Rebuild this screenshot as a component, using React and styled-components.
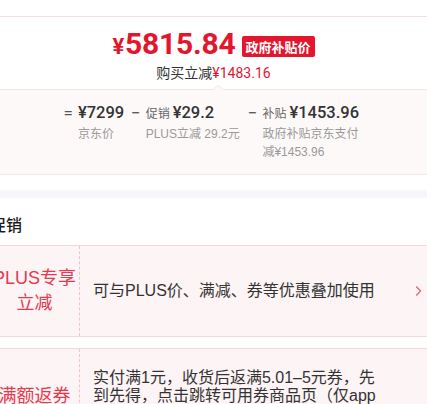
import React from "react";
import styled, { createGlobalStyle } from "styled-components";

const RED = "#e4162d";

const GlobalStyle = createGlobalStyle`
  html, body { margin: 0; padding: 0; background: #fff; }
  body {
    font-family: "Liberation Sans", "Noto Sans CJK SC", sans-serif;
    color: #333;
    overflow: hidden;
  }
  * { box-sizing: border-box; }
`;

const Page = styled.div`
  width: 427px;
  overflow: hidden;
  background: #fff;
`;

const TopStrip = styled.div`
  height: 17px;
  border-bottom: 1px solid #f6dfe2;
`;

const PricePanel = styled.div`
  display: flex;
  flex-direction: column;
  align-items: center;
  padding: 11px 0 6px;
`;

const PriceLine = styled.div`
  display: flex;
  align-items: center;
  height: 34px;
`;

const BigPrice = styled.span`
  font-family: Roboto, "Liberation Sans", sans-serif;
  font-weight: 700;
  font-size: 30px;
  line-height: 34px;
  color: ${RED};
  letter-spacing: -0.2px;
`;

const BigYen = styled.span`
  font-size: 22px;
  margin-right: 1px;
`;

const Badge = styled.span`
  margin-left: 6px;
  margin-top: 2px;
  height: 21px;
  padding: 0 4px;
  background: ${RED};
  color: #fff;
  border-radius: 2px;
  font-family: "Noto Sans CJK SC", sans-serif;
  font-weight: 700;
  font-size: 13px;
  line-height: 21px;
`;

const SubLine = styled.div`
  font-family: "Noto Sans CJK SC", sans-serif;
  font-size: 14px;
  line-height: 20px;
  color: #333;
`;

const RedNum = styled.span`
  font-family: Roboto, sans-serif;
  color: ${RED};
`;

const Breakdown = styled.div`
  position: relative;
  background: #fdf9f9;
  border-top: 1px solid #f2e4e5;
  border-bottom: 1px solid #ececec;
  padding: 12px 4px 13px 0;

  &::before,
  &::after {
    content: "";
    position: absolute;
    left: 213px;
    width: 0;
    height: 0;
    border-left: 5px solid transparent;
    border-right: 5px solid transparent;
  }
  &::before {
    top: -5px;
    border-bottom: 4px solid #f2e4e5;
  }
  &::after {
    top: -4px;
    border-bottom: 4px solid #fdf9f9;
  }
`;

const Formula = styled.div`
  display: flex;
  justify-content: center;
  align-items: flex-start;
  gap: 5px;
`;

const Op = styled.span`
  font-family: Roboto, sans-serif;
  font-size: 17px;
  line-height: 22px;
  color: #555;
`;

const Col = styled.div`
  display: flex;
  flex-direction: column;
  width: ${(p) => p.$w}px;
  flex: none;
`;

const ColTop = styled.div`
  display: flex;
  align-items: baseline;
  white-space: nowrap;
  height: 22px;
  line-height: 22px;
`;

const Tag = styled.span`
  font-family: "Noto Sans CJK SC", sans-serif;
  font-size: 12px;
  color: #666;
  margin-right: 3px;
`;

const Amount = styled.span`
  font-family: Roboto, sans-serif;
  font-weight: 500;
  font-size: 16.5px;
  color: #333;
`;

const Note = styled.div`
  margin-top: 1px;
  font-size: 12px;
  line-height: 18px;
  color: #999;
`;

const Spacer = styled.div`
  height: 15px;
`;

const Band = styled.div`
  height: 8px;
  background: #f5f7fa;
`;

const Promo = styled.section`
  margin-left: -10px;
  width: 437px;
`;

const Heading = styled.h3`
  margin: 0 0 9px;
  padding-top: 14px;
  font-family: "Noto Sans CJK SC", sans-serif;
  font-weight: 500;
  font-size: 16px;
  line-height: 24px;
  color: #1a1a1a;
`;

const Row = styled.div`
  display: flex;
  background: #fdf4f5;
  border-top: 1px solid #f4d9dc;
  border-bottom: 1px solid #f4d9dc;
  margin-bottom: 11px;
`;

const Label = styled.div`
  flex: none;
  width: 90px;
  display: flex;
  align-items: center;
  justify-content: center;
  text-align: center;
  padding: 20px 0;
  font-size: 18px;
  line-height: 25px;
  color: #e63950;
  border-right: 1px dashed #efc3c8;
`;

const Desc = styled.div`
  flex: 1;
  display: flex;
  align-items: center;
  padding: 20px 0 20px 13px;
  font-size: 16px;
  line-height: 18px;
  color: #333;
`;

const ArrowCell = styled.div`
  flex: none;
  width: 40px;
  display: flex;
  align-items: center;
  justify-content: flex-end;
  padding-right: 5px;
`;

const Chevron = () => (
  <svg width="7" height="12" viewBox="0 0 7 12" fill="none">
    <polyline points="1.2,1.5 5.6,6 1.2,10.5" stroke="#e0606e" strokeWidth="1.2" />
  </svg>
);

const promos = [
  { label: "PLUS专享立减", text: "可与PLUS价、满减、券等优惠叠加使用", arrow: true },
  {
    label: "满额返券",
    text: "实付满1元，收货后返满5.01–5元券，先到先得，点击跳转可用券商品页（仅app可用）",
    arrow: false,
  },
];

export default function App() {
  return (
    <Page>
      <GlobalStyle />
      <TopStrip />
      <PricePanel>
        <PriceLine>
          <BigPrice>
            <BigYen>¥</BigYen>5815.84
          </BigPrice>
          <Badge>政府补贴价</Badge>
        </PriceLine>
        <SubLine>
          购买立减<RedNum>¥1483.16</RedNum>
        </SubLine>
      </PricePanel>
      <Breakdown>
        <Formula>
          <Op>=</Op>
          <Col $w={48}>
            <ColTop>
              <Amount>¥7299</Amount>
            </ColTop>
            <Note>京东价</Note>
          </Col>
          <Op>−</Op>
          <Col $w={97}>
            <ColTop>
              <Tag>促销</Tag>
              <Amount>¥29.2</Amount>
            </ColTop>
            <Note>PLUS立减 29.2元</Note>
          </Col>
          <Op>−</Op>
          <Col $w={97}>
            <ColTop>
              <Tag>补贴</Tag>
              <Amount>¥1453.96</Amount>
            </ColTop>
            <Note>政府补贴京东支付减¥1453.96</Note>
          </Col>
        </Formula>
      </Breakdown>
      <Spacer />
      <Band />
      <Promo>
        <Heading>促销</Heading>
        {promos.map((p) => (
          <Row key={p.label}>
            <Label>{p.label}</Label>
            <Desc>
              <span>{p.text}</span>
            </Desc>
            <ArrowCell>{p.arrow && <Chevron />}</ArrowCell>
          </Row>
        ))}
      </Promo>
    </Page>
  );
}
